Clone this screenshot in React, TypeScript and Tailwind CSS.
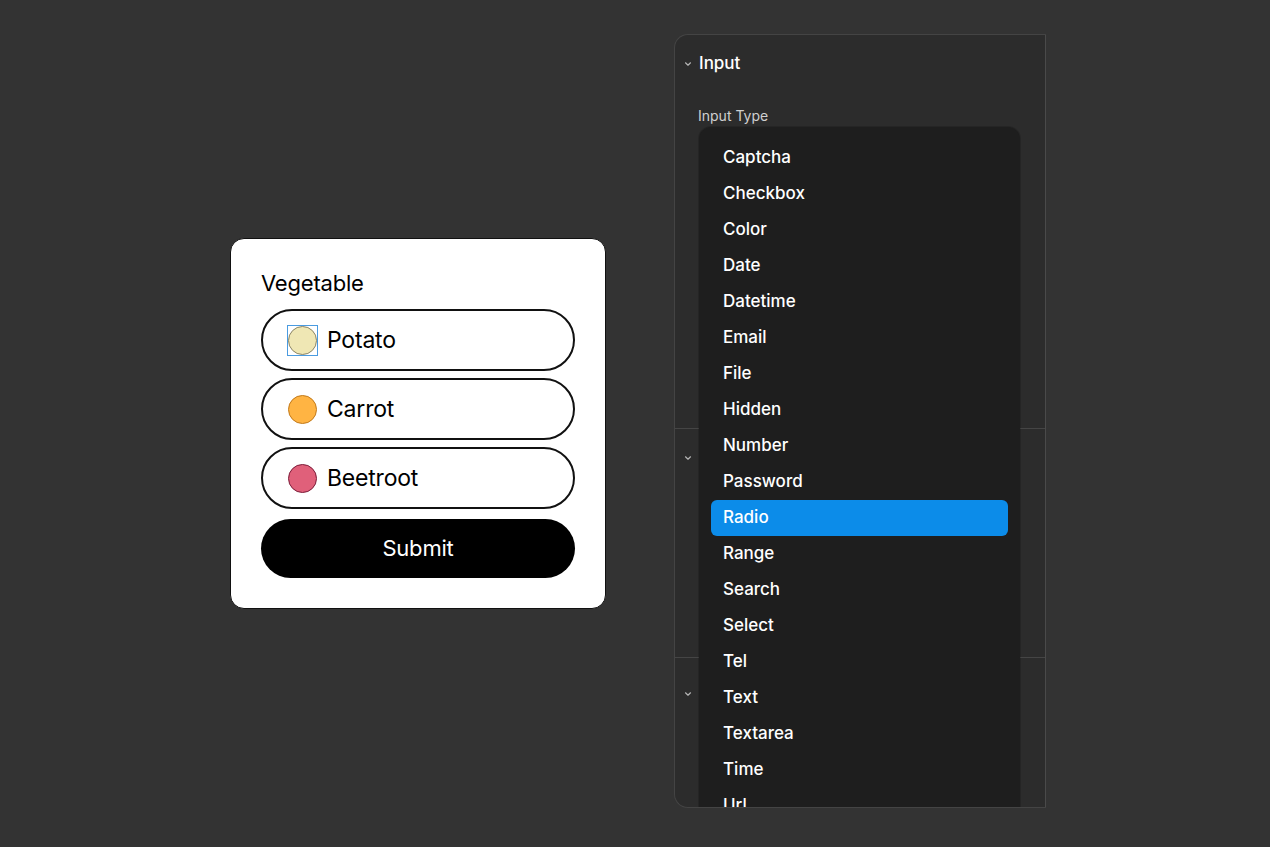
import React from 'react';

const options = [
  { label: 'Potato', fill: 'bg-[#efe7b4]', ring: 'border-[#8a8466]', focused: true },
  { label: 'Carrot', fill: 'bg-[#ffb443]', ring: 'border-[#c27a1c]', focused: false },
  { label: 'Beetroot', fill: 'bg-[#e0607a]', ring: 'border-[#7c1d3a]', focused: false },
];

const inputTypes = [
  'Captcha', 'Checkbox', 'Color', 'Date', 'Datetime', 'Email', 'File', 'Hidden', 'Number',
  'Password', 'Radio', 'Range', 'Search', 'Select', 'Tel', 'Text', 'Textarea', 'Time', 'Url',
];

const Chevron = () => (
  <svg width="8" height="6" viewBox="0 0 8 6" fill="none" className="shrink-0">
    <path d="M1.5 1.8 L4 4.2 L6.5 1.8" stroke="#b5b5b5" strokeWidth="1.2" strokeLinecap="round" strokeLinejoin="round" />
  </svg>
);

export default function App() {
  return (
    <div
      className="w-full h-[847px] bg-[#333333] flex items-center justify-center gap-[68px] pl-[6px] overflow-hidden"
      style={{ fontFamily: 'Inter, "Noto Sans", sans-serif' }}
    >
      {/* form card */}
      <div className="w-[376px] shrink-0 bg-white rounded-[14px] border border-[#111] px-[30px] pt-[30px] pb-[30px]">
        <div className="text-[22px] leading-7 text-black mb-3 tracking-[-0.2px]">Vegetable</div>
        <div className="flex flex-col gap-[7px]">
          {options.map((o) => (
            <div key={o.label} className="h-[62px] rounded-full border-2 border-[#111] flex items-center pl-[24px]">
              <div className={`relative w-[31px] h-[31px] flex items-center justify-center ${o.focused ? 'border border-[#4a9be0]' : ''}`}>
                <div className={`w-[29px] h-[29px] rounded-full border ${o.fill} ${o.ring}`} />
              </div>
              <span className="ml-[9px] text-[23px] text-black tracking-[-0.2px]">{o.label}</span>
            </div>
          ))}
        </div>
        <button className="mt-[10px] w-full h-[59px] rounded-full bg-black text-white text-[22px] tracking-[-0.2px]">
          Submit
        </button>
      </div>

      {/* properties panel */}
      <div className="relative w-[372px] shrink-0 h-[774px] -mt-[5px] bg-[#2c2c2c] border border-[#444444] border-r-[#4a4a4a] rounded-l-[14px] overflow-hidden">
        <div className="h-[394px] border-b border-[#454545]">
          <div className="flex items-center h-[58px] pl-[9px] gap-[7px]">
            <Chevron />
            <span className="text-[17px] font-medium text-white">Input</span>
          </div>
          <div className="pl-[23px] mt-[12px] text-[14px] text-[#d0d0d0]">Input Type</div>
        </div>
        <div className="h-[229px] border-b border-[#454545]">
          <div className="flex items-center h-[58px] pl-[9px]">
            <Chevron />
          </div>
        </div>
        <div className="flex items-center h-[72px] pl-[9px]">
          <Chevron />
        </div>

        {/* open select menu */}
        <div className="absolute left-[24px] top-[92px] w-[321px] bg-[#1e1e1e] rounded-[12px] px-[12px] pt-[13px] pb-3 shadow-[0_0_0_1px_rgba(0,0,0,0.15)]">
          {inputTypes.map((t) => (
            <div
              key={t}
              className={`h-9 flex items-center px-3 text-[17px] font-medium rounded-[6px] ${t === 'Radio' ? 'bg-[#0c8ce9] text-white' : 'text-white'}`}
            >
              {t}
            </div>
          ))}
        </div>
      </div>
    </div>
  );
}
